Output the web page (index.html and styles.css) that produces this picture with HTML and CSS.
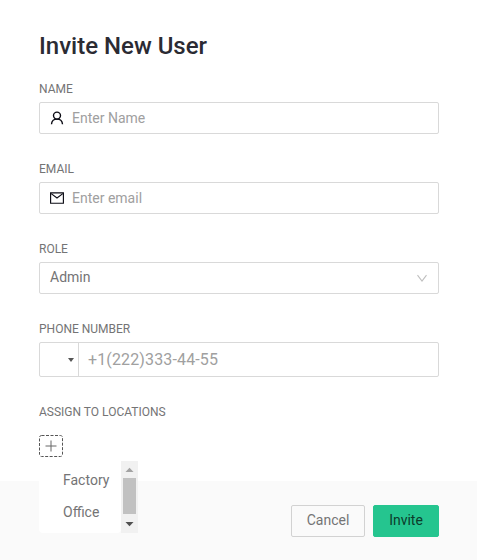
FILE: index.html
```html
<!DOCTYPE html>
<html lang="en">
<head>
<meta charset="utf-8">
<title>Invite New User</title>
<link rel="stylesheet" href="styles.css">
</head>
<body>
<form class="dialog">
  <div class="content">
    <h1 class="title">Invite New User</h1>
    <div class="field">
      <div class="label">NAME</div>
      <div class="control">
        <svg class="icon" viewBox="0 0 14 14"><circle cx="7" cy="4.6" r="3.5"/><path d="M1.5 13.2C1.7 10.2 3.7 8.1 7 8.1s5.3 2.1 5.5 5.1"/></svg>
        <span class="placeholder">Enter Name</span>
      </div>
    </div>
    <div class="field">
      <div class="label">EMAIL</div>
      <div class="control">
        <svg class="icon mail" viewBox="0 0 14 14"><path d="M.6 1.9h12.8v10.3H.6z"/><path d="M1.2 2.6 7 7l5.8-4.4"/></svg>
        <span class="placeholder">Enter email</span>
      </div>
    </div>
    <div class="field">
      <div class="label">ROLE</div>
      <div class="control select">
        <span class="value">Admin</span>
        <svg class="chevron" viewBox="0 0 12 12"><path d="M1.5 3.2 6 9.2l4.5-6"/></svg>
      </div>
    </div>
    <div class="field">
      <div class="label">PHONE NUMBER</div>
      <div class="control phone">
        <div class="country"><span class="caret"></span></div>
        <span class="placeholder number">+1(222)333-44-55</span>
      </div>
    </div>
    <div class="label">ASSIGN TO LOCATIONS</div>
    <div class="locations">
      <svg class="add" viewBox="0 0 24 22"><rect class="add-frame" x=".5" y=".5" width="23" height="21" rx="2"/><path class="add-plus" d="M6.5 11h11M12 5.5v11"/></svg>
      <div class="menu">
        <div class="options">
          <div class="option">Factory</div>
          <div class="option">Office</div>
        </div>
        <div class="scrollbar">
          <svg class="arrow arrow-up" viewBox="0 0 17 17"><path d="M4.5 11h8L8.5 6.8z"/></svg>
          <div class="thumb"></div>
          <svg class="arrow" viewBox="0 0 17 17"><path d="M4.5 6h8l-4 4.2z"/></svg>
        </div>
      </div>
    </div>
  </div>
  <div class="footer">
    <button type="button" class="button">Cancel</button>
    <button type="button" class="button primary">Invite</button>
  </div>
</form>
</body>
</html>
```

FILE: styles.css
```css
* { box-sizing: border-box; }
body {
  margin: 0;
  background: #fff;
  color: #747475;
  font: 14px/22px Roboto, sans-serif;
}
.dialog {
  display: flex;
  flex-direction: column;
  height: 560px;
}
.content {
  height: 481px;
  padding: 30px 38px 0 39px;
}
.title {
  margin: 0 0 14px;
  color: #2b2b33;
  font-size: 24px;
  font-weight: 500;
  line-height: 32px;
}
.field { margin-bottom: 22px; }
.label {
  font-size: 12px;
  line-height: 26px;
}
.control {
  display: flex;
  align-items: center;
  height: 32px;
  padding: 0 11px 0 10px;
  border: 1px solid #d9d9d9;
  border-radius: 2px;
}
.icon {
  width: 14px;
  height: 14px;
  margin-right: 8px;
  fill: none;
  stroke: #0b0b14;
  stroke-width: 1.4;
}
.mail { stroke-width: 1.15; }
.placeholder { color: #a0a0a0; }
.select {
  justify-content: space-between;
  padding-right: 10px;
}
.value { margin-top: -2px; }
.chevron {
  width: 12px;
  height: 12px;
  fill: none;
  stroke: #bfbfbf;
  stroke-width: 1.1;
}
.phone {
  height: 35px;
  padding: 0;
}
.country {
  display: flex;
  align-items: center;
  justify-content: flex-end;
  width: 39px;
  height: 100%;
  padding-right: 4px;
  border-right: 1px solid #d9d9d9;
}
.caret {
  border: 3px solid transparent;
  border-top: 4px solid #555;
  border-bottom: 0;
}
.number {
  margin-left: 9px;
  font-size: 16px;
  letter-spacing: .14px;
}
.locations {
  position: relative;
  padding-top: 10px;
}
.add {
  display: block;
  width: 24px;
  height: 22px;
  fill: none;
}
.add-frame {
  stroke: #555;
  stroke-dasharray: 3 1.5;
}
.add-plus { stroke: #666; }
.menu {
  position: absolute;
  top: 36px;
  left: 0;
  display: flex;
  width: 99px;
  height: 72px;
}
.options {
  flex: 1;
  padding: 4px 0 4px 24px;
  background: #fff;
  border-radius: 4px;
}
.option { line-height: 32px; }
.option:first-child { margin-top: -1px; }
.scrollbar {
  display: flex;
  flex-direction: column;
  align-items: center;
  width: 17px;
  background: #f1f1f1;
}
.arrow {
  width: 17px;
  height: 17px;
  fill: #505050;
}
.arrow-up { fill: #a3a3a3; }
.thumb {
  width: 13px;
  height: 36px;
  margin: 0 0 2px;
  background: #c1c1c1;
}
.footer {
  display: flex;
  flex: 1;
  gap: 8px;
  justify-content: flex-end;
  align-items: flex-start;
  padding: 24px 38px 0;
  background: #fafafa;
}
.button {
  width: 74px;
  height: 32px;
  padding: 0 0 2px;
  border: 1px solid #d2d2d2;
  border-radius: 2px;
  background: #fafafa;
  color: #747475;
  font: inherit;
}
.primary {
  width: 66px;
  border-color: #25c58f;
  background: #25c58f;
  color: #0c3b2b;
}
```
